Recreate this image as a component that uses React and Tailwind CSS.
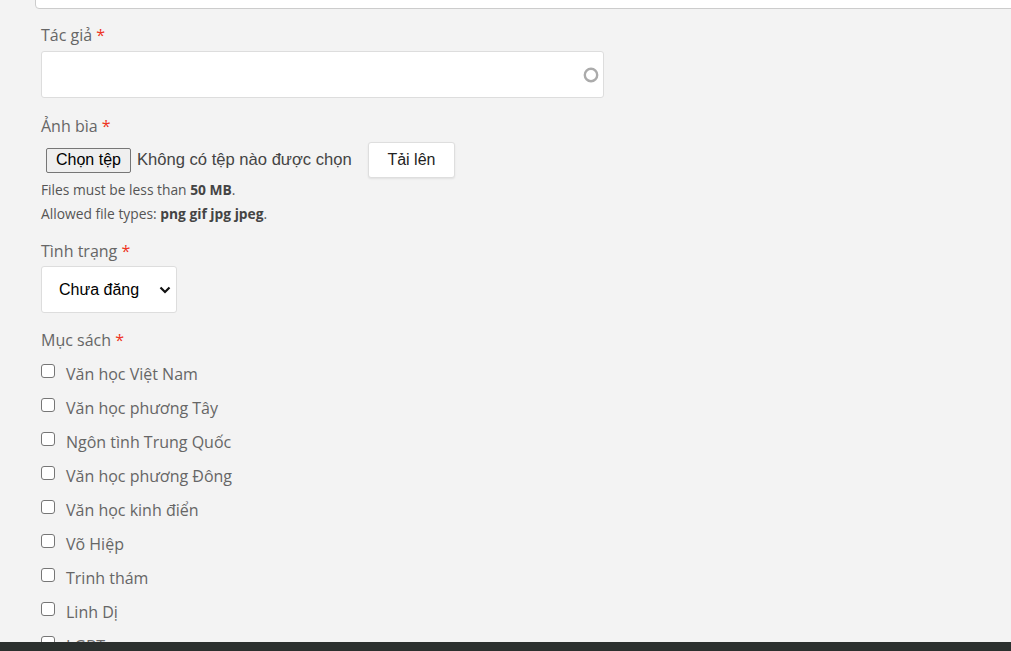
import React from "react";

const categories = [
  "Văn học Việt Nam",
  "Văn học phương Tây",
  "Ngôn tình Trung Quốc",
  "Văn học phương Đông",
  "Văn học kinh điển",
  "Võ Hiệp",
  "Trinh thám",
  "Linh Dị",
  "LGBT",
];

const Label = ({ children }) => (
  <div className="text-[16px] leading-[24px] text-[#666]">
    {children} <span className="text-[#e32]">*</span>
  </div>
);

const CheckRow = ({ label }) => (
  <label className="mt-[10px] flex h-[24px] items-start">
    <span className="mt-[2px] block h-[14px] w-[14px] shrink-0 rounded-[3px] border border-[#767676] bg-white" />
    <span className="ml-[11px] text-[16px] leading-[24px] text-[#666]">{label}</span>
  </label>
);

const BookForm = () => {
  return (
    <div
      className="flex h-[651px] w-[1011px] flex-col overflow-hidden bg-[#f3f3f3]"
      style={{ fontFamily: "'Open Sans', sans-serif" }}
    >
      <div className="flex-1 overflow-hidden pl-[35px]">
        {/* previous field, scrolled out of view */}
        <div className="-mt-[30px] h-[39px] w-[1000px] rounded-[4px] border border-[#cccccc] bg-white" />

        <div className="pl-[6px]">
          <div className="mt-[14px]">
            <Label>Tác giả</Label>
            <div className="relative mt-[4px] h-[47px] w-[563px] rounded-[3px] border border-[#dddddd] bg-white">
              <svg
                className="absolute right-[3px] top-[14px]"
                width="18"
                height="18"
                viewBox="0 0 18 18"
              >
                <circle cx="9" cy="9" r="6.2" fill="none" stroke="#ababab" strokeWidth="2.4" />
              </svg>
            </div>
          </div>

          <div className="mt-[16px]">
            <Label>Ảnh bìa</Label>
            <div
              className="mt-[4px] flex h-[36px] items-center"
              style={{ fontFamily: "'Liberation Sans', Arial, sans-serif" }}
            >
              <button className="ml-[5px] h-[25px] rounded-[2px] border border-[#767676] bg-[#efefef] px-[9px] text-[16px] leading-[20px] text-black">
                Chọn tệp
              </button>
              <span className="ml-[6px] w-[231px] text-[16.6px] text-[#444]">Không có tệp nào được chọn</span>
              <button className="h-[36px] w-[87px] rounded-[3px] border border-[#dedede] bg-white text-[16px] text-[#222] shadow-[0_1px_2px_rgba(0,0,0,0.08)]">
                Tải lên
              </button>
            </div>
            <div className="text-[13.8px] leading-[24px] text-[#555]">
              Files must be less than <strong className="font-bold text-[#444]">50 MB</strong>.
            </div>
            <div className="text-[13.8px] leading-[24px] text-[#555]">
              Allowed file types: <strong className="font-bold text-[#444]">png gif jpg jpeg</strong>.
            </div>
          </div>

          <div className="mt-[13px]">
            <Label>Tình trạng</Label>
            <div
              className="relative mt-[3px] flex h-[47px] w-[136px] items-center rounded-[3px] border border-[#dddddd] bg-white"
              style={{ fontFamily: "'Liberation Sans', Arial, sans-serif" }}
            >
              <span className="pl-[17px] text-[16px] text-black">Chưa đăng</span>
              <svg
                className="absolute right-[5px] top-[19px]"
                width="12"
                height="8"
                viewBox="0 0 12 8"
              >
                <path d="M1.5 1.5 L6 6 L10.5 1.5" fill="none" stroke="#111" strokeWidth="2.2" />
              </svg>
            </div>
          </div>

          <div className="mt-[15px]">
            <Label>Mục sách</Label>
            {categories.map((c) => (
              <CheckRow key={c} label={c} />
            ))}
          </div>
        </div>
      </div>
      <div className="h-[9px] shrink-0 bg-[#2b302e]" />
    </div>
  );
};

export default BookForm;
